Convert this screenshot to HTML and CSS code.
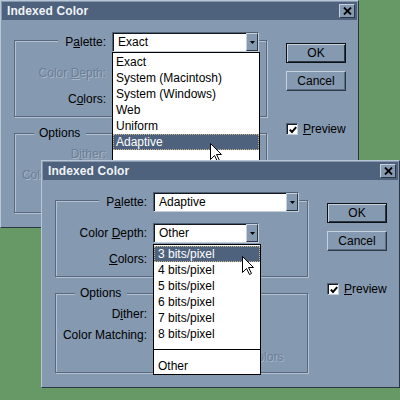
FILE: index.html
```html
<!DOCTYPE html>
<html>
<head>
<meta charset="utf-8">
<link rel="stylesheet" href="styles.css">
</head>
<body>
<div class="desktop">
  <div class="dialog d1">
    <div class="titlebar">
      <span class="title">Indexed Color</span>
      <span class="close"><svg width="9" height="8" viewBox="0 0 9 8"><path d="M1 0.5 L8 7.5 M8 0.5 L1 7.5" stroke="#000" stroke-width="1.8" fill="none"/></svg></span>
    </div>
    <div class="content">
      <div class="left">
        <div class="group g-palette">
          <div class="row head">
            <span class="lbl"><span class="lg">P<u>a</u>lette:</span></span>
            <div class="select wide"><span>Exact</span><span class="arrow"><svg width="5" height="3" viewBox="0 0 5 3"><path d="M0 0 H5 L2.5 3 Z" fill="#000"/></svg></span></div>
          </div>
          <div class="row r-depth">
            <span class="lbl dis">Color <u>D</u>epth:</span>
            <div class="select mid"><span></span><span class="arrow"></span></div>
          </div>
          <div class="row r-colors">
            <span class="lbl">C<u>o</u>lors:</span>
            <div class="field"></div>
          </div>
        </div>
        <div class="group g-options">
          <div class="ohead"><span class="lg">Options</span></div>
          <div class="row r-dither"><span class="lbl dis">D<u>i</u>ther:</span></div>
          <div class="row r-match"><span class="lbl dis">Color Matching:</span></div>
          <div class="row r-preserve"></div>
        </div>
      </div>
      <div class="right">
        <div class="btn default">OK</div>
        <div class="btn cancel">Cancel</div>
        <div class="check"><span class="box"><svg width="8" height="8" viewBox="0 0 8 8"><path d="M0.8 3.6 L3 6 L7.2 1.2" stroke="#000" stroke-width="2" fill="none"/></svg></span><span><u>P</u>review</span></div>
      </div>
    </div>
    <ul class="list l1">
      <li>Exact</li>
      <li>System (Macintosh)</li>
      <li>System (Windows)</li>
      <li>Web</li>
      <li>Uniform</li>
      <li class="hl">Adaptive</li>
    </ul>
    <svg class="cursor c1" width="13" height="20" viewBox="0 0 13 20"><path d="M0.5 0.5 L0.5 16.5 L4.5 12.5 L7.5 18.5 L9.5 17.5 L6.5 11.5 L11.5 11.5 Z" fill="#fff" stroke="#000" stroke-width="1"/></svg>
  </div>

  <div class="dialog d2">
    <div class="titlebar">
      <span class="title">Indexed Color</span>
      <span class="close"><svg width="9" height="8" viewBox="0 0 9 8"><path d="M1 0.5 L8 7.5 M8 0.5 L1 7.5" stroke="#000" stroke-width="1.8" fill="none"/></svg></span>
    </div>
    <div class="content">
      <div class="left">
        <div class="group g-palette">
          <div class="row head">
            <span class="lbl"><span class="lg">P<u>a</u>lette:</span></span>
            <div class="select wide2"><span>Adaptive</span><span class="arrow"><svg width="5" height="3" viewBox="0 0 5 3"><path d="M0 0 H5 L2.5 3 Z" fill="#000"/></svg></span></div>
          </div>
          <div class="row r-depth">
            <span class="lbl">Color <u>D</u>epth:</span>
            <div class="select mid"><span>Other</span><span class="arrow"><svg width="5" height="3" viewBox="0 0 5 3"><path d="M0 0 H5 L2.5 3 Z" fill="#000"/></svg></span></div>
          </div>
          <div class="row r-colors">
            <span class="lbl"><u>C</u>olors:</span>
            <div class="field"></div>
          </div>
        </div>
        <div class="group g-options">
          <div class="ohead"><span class="lg">Options</span></div>
          <div class="row r-dither"><span class="lbl">D<u>i</u>ther:</span></div>
          <div class="row r-match"><span class="lbl">Color Matching:</span></div>
          <div class="row r-preserve"><span></span><span class="dis pres">Preserve Exact Colors</span></div>
        </div>
      </div>
      <div class="right">
        <div class="btn default">OK</div>
        <div class="btn cancel">Cancel</div>
        <div class="check"><span class="box"><svg width="8" height="8" viewBox="0 0 8 8"><path d="M0.8 3.6 L3 6 L7.2 1.2" stroke="#000" stroke-width="2" fill="none"/></svg></span><span><u>P</u>review</span></div>
      </div>
    </div>
    <ul class="list l2">
      <li class="hl">3 bits/pixel</li>
      <li>4 bits/pixel</li>
      <li>5 bits/pixel</li>
      <li>6 bits/pixel</li>
      <li>7 bits/pixel</li>
      <li>8 bits/pixel</li>
      <li class="sep"></li>
      <li>Other</li>
    </ul>
    <svg class="cursor c2" width="13" height="20" viewBox="0 0 13 20"><path d="M0.5 0.5 L0.5 16.5 L4.5 12.5 L7.5 18.5 L9.5 17.5 L6.5 11.5 L11.5 11.5 Z" fill="#fff" stroke="#000" stroke-width="1"/></svg>
  </div>
</div>
</body>
</html>
```
FILE: styles.css
```css
:root {
  --face: #8599b1;
  --title: #4e627d;
  --light: #b9c6d5;
  --dark: #2c3744;
  --etch-dark: #58697f;
  --etch-light: #b3c1d1;
}
* { box-sizing: border-box; }
body {
  margin: 0;
  background: #669966;
  font-family: "Liberation Sans", Arial, sans-serif;
  font-size: 12px;
  color: #000;
}
.desktop {
  position: relative;
  width: 400px;
  height: 400px;
  overflow: hidden;
}
.dialog {
  position: absolute;
  width: 359px;
  height: 228px;
  background: var(--face);
  border: 1px solid;
  border-color: var(--light) var(--dark) var(--dark) var(--light);
  padding: 1px;
}
.d1 { left: 0; top: 0; }
.d2 { left: 41px; top: 160px; }

.titlebar {
  height: 18px;
  background: var(--title);
  display: flex;
  align-items: center;
  justify-content: space-between;
  padding: 0 2px 0 5px;
}
.title {
  color: #f0f3f7;
  font-weight: bold;
  font-size: 12px;
  letter-spacing: 0.1px;
}
.close {
  width: 16px;
  height: 14px;
  background: var(--face);
  border: 1px solid;
  border-color: #c6d1dd var(--dark) var(--dark) #c6d1dd;
  display: flex;
  align-items: center;
  justify-content: center;
}
.close svg { display: block; }

.content {
  display: flex;
  padding: 12px 0 0 12px;
}
.left { width: 253px; }

.group {
  border: 1px solid var(--etch-dark);
  box-shadow: inset 1px 1px 0 var(--etch-light), 1px 1px 0 var(--etch-light);
}
.g-palette { margin-top: 8px; height: 77px; }
.g-options { margin-top: 16px; height: 80px; }

.row {
  display: grid;
  grid-template-columns: 97px auto;
  align-items: center;
  height: 20px;
}
.lbl {
  text-align: right;
  padding-right: 6px;
  white-space: nowrap;
}
.head { margin-top: -9px; }
.head .lbl { padding-right: 0; }
.lg {
  background: var(--face);
  padding: 0 6px 0 7px;
}
.r-depth { margin-top: 11px; }
.r-colors { margin-top: 6px; }

.ohead {
  margin-top: -9px;
  height: 16px;
  display: flex;
  align-items: center;
  padding-left: 19px;
}
.ohead .lg { padding: 0 6px 0 5px; }
.r-dither { margin-top: 3px; }
.r-match { margin-top: 1px; }
.r-preserve { margin-top: 2px; }
.pres { padding-left: 11px; white-space: nowrap; }

.dis {
  color: #6b7e96;
  text-shadow: 1px 1px 0 #a7b6c7;
}

.select {
  height: 20px;
  background: #fff;
  border: 1px solid;
  border-color: #4f5f74 #c3cfdc #c3cfdc #4f5f74;
  box-shadow: inset 1px 1px 0 #15191f;
  display: flex;
  align-items: center;
  justify-content: space-between;
  padding-left: 5px;
  white-space: nowrap;
}
.wide { width: 147px; }
.wide2 { width: 146px; }
.mid { width: 106px; }
.arrow {
  width: 12px;
  height: 18px;
  background: var(--face);
  border: 1px solid;
  border-color: #c6d1dd var(--dark) var(--dark) #c6d1dd;
  display: flex;
  align-items: center;
  justify-content: center;
}
.arrow svg { display: block; }
.field {
  width: 60px;
  height: 20px;
  background: #fff;
}

.right {
  margin-left: 19px;
  padding-top: 11px;
  display: flex;
  flex-direction: column;
}
.btn {
  width: 60px;
  height: 20px;
  background: var(--face);
  border: 1px solid;
  border-color: #c6d1dd var(--dark) var(--dark) #c6d1dd;
  box-shadow: inset -1px -1px 0 #5d6e86;
  display: flex;
  align-items: center;
  justify-content: center;
}
.btn.default {
  border: 1px solid #0d1014;
  box-shadow: inset 1px 1px 0 #c6d1dd, inset -1px -1px 0 #2c3744;
}
.cancel { margin-top: 8px; }
.check {
  margin-top: 32px;
  display: flex;
  align-items: center;
  gap: 5px;
  height: 12px;
}
.box {
  width: 12px;
  height: 12px;
  background: #fff;
  border: 1px solid;
  border-color: #4f5f74 #c3cfdc #c3cfdc #4f5f74;
  box-shadow: inset 1px 1px 0 #15191f;
  display: flex;
  align-items: center;
  justify-content: center;
  padding: 1px 0 0 1px;
}
.box svg { display: block; }

.list {
  position: absolute;
  margin: 0;
  padding: 1px 0 0;
  list-style: none;
  background: #fff;
  border: 1px solid #000;
  overflow: hidden;
}
.list li {
  height: 16px;
  line-height: 16px;
  padding-left: 3px;
  white-space: nowrap;
}
.l1 { left: 111px; top: 51px; width: 148px; height: 131px; }
.l2 { left: 111px; top: 83px; width: 108px; height: 131px; }
.l2 li { padding-left: 4px; }
.list li.hl {
  background: var(--title);
  color: #fff;
  outline: 1px dotted #c9b68e;
  outline-offset: -1px;
}
.list li.sep { position: relative; }
.list li.sep::after {
  content: "";
  position: absolute;
  left: 0;
  right: 0;
  top: 7px;
  height: 1px;
  background: #000;
}
.cursor { position: absolute; display: block; }
.c1 { left: 209px; top: 142px; }
.c2 { left: 200px; top: 95px; }
```
